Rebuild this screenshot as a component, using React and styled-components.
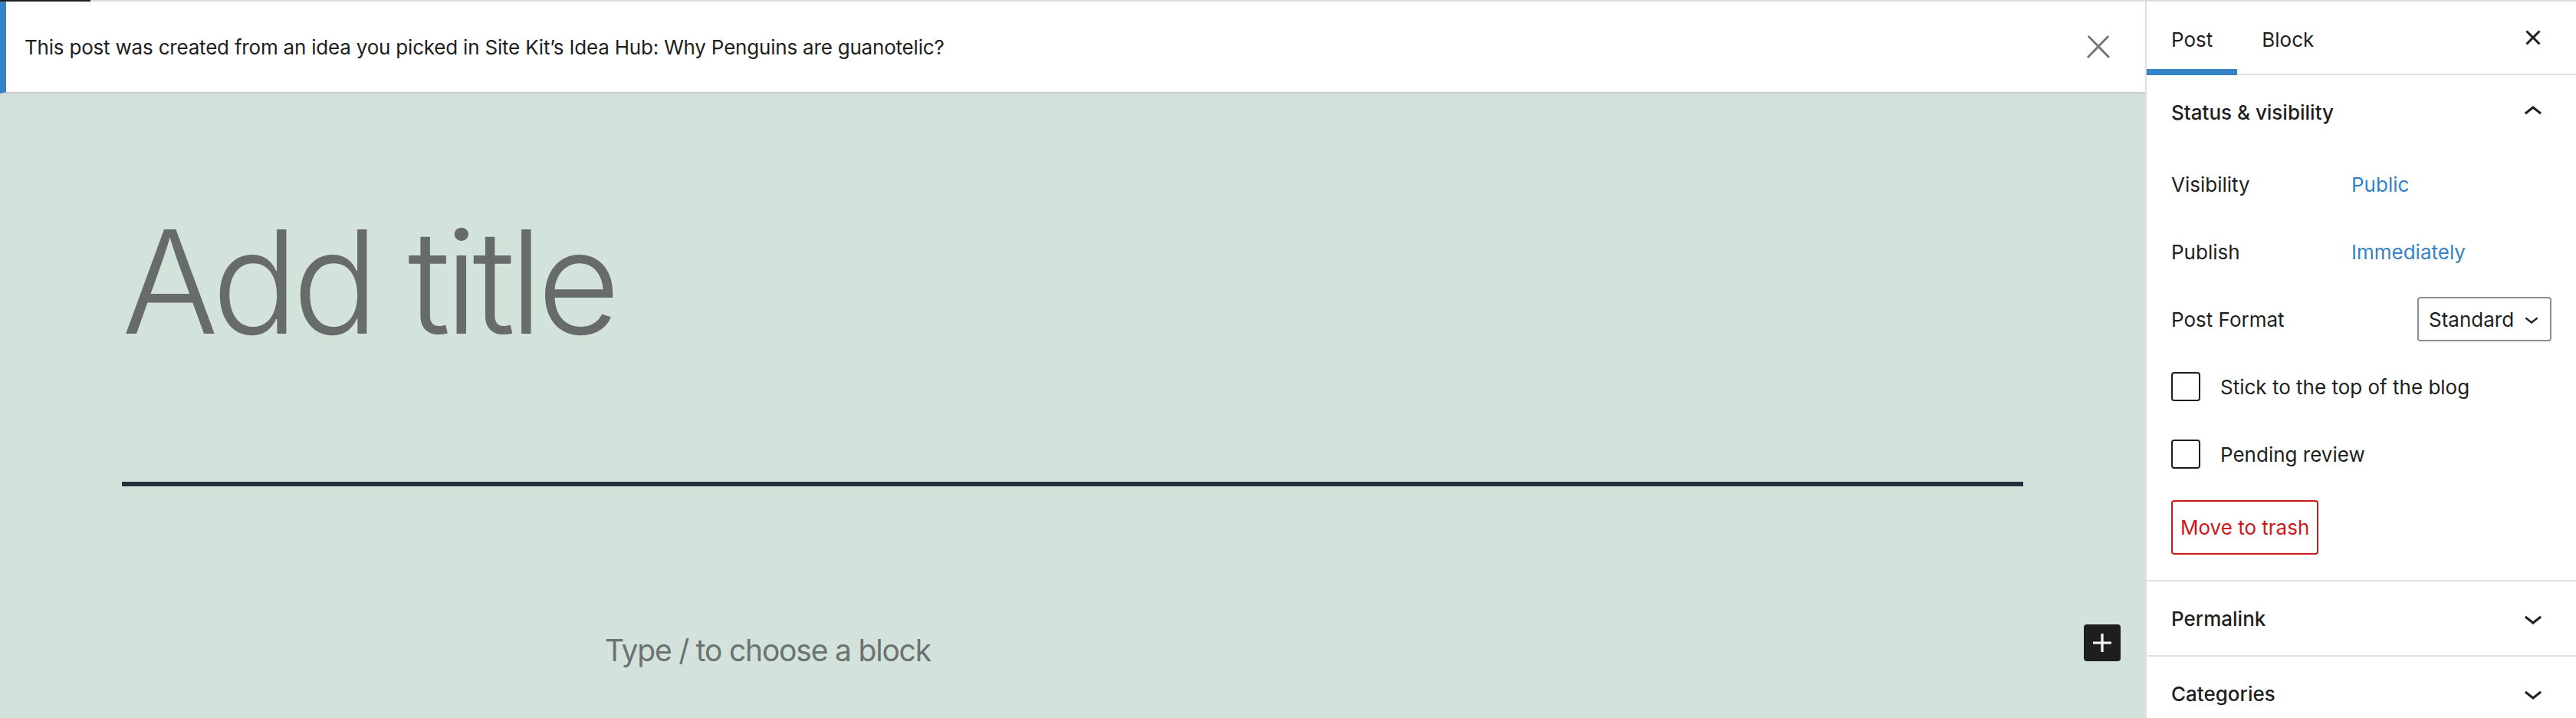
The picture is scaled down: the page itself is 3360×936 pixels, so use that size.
import React from "react"
import styled, { createGlobalStyle } from "styled-components"

const GlobalStyle = createGlobalStyle`
  html, body {
    margin: 0;
    padding: 0;
  }
  body {
    font-family: Inter, "Noto Sans", "Liberation Sans", sans-serif;
    color: #1e1e1e;
    -webkit-font-smoothing: antialiased;
  }
  * {
    box-sizing: border-box;
  }
`

const Shell = styled.div`
  width: 3360px;
  height: 936px;
  display: flex;
  flex-direction: column;
  overflow: hidden;
  background: #fff;
`

const TopEdge = styled.div`
  height: 2px;
  flex-shrink: 0;
  display: flex;
  background: #dddddd;
`

const TopEdgeMark = styled.div`
  width: 118px;
  background: #1e1e1e;
`

const Workspace = styled.div`
  flex: 1;
  display: flex;
  min-height: 0;
`

const EditorColumn = styled.main`
  flex: 1;
  min-width: 0;
  display: flex;
  flex-direction: column;
`

const Notice = styled.div`
  height: 120px;
  flex-shrink: 0;
  display: flex;
  align-items: center;
  justify-content: space-between;
  padding: 0 37px 0 24px;
  background: #fff;
  border-left: 8px solid #3582c4;
  border-bottom: 2px solid #cccccc;
`

const NoticeText = styled.p`
  margin: 0;
  font-size: 26px;
  letter-spacing: -0.2px;
  color: #1e1e1e;
`

const IconButton = styled.button`
  width: ${props => props.size || 48}px;
  height: ${props => props.size || 48}px;
  display: flex;
  align-items: center;
  justify-content: center;
  padding: 0;
  border: none;
  background: none;
  color: ${props => props.color || "#1e1e1e"};
  cursor: pointer;
`

const Canvas = styled.section`
  flex: 1;
  display: flex;
  flex-direction: column;
  align-items: center;
  padding-top: 152px;
  background: #d3e3dc;
`

const TitleBlock = styled.div`
  width: 2480px;
  padding-bottom: 167px;
  border-bottom: 6px solid #28303d;
`

const TitleInput = styled.h1`
  margin: 0;
  font-size: 187px;
  line-height: 1;
  font-weight: 300;
  letter-spacing: -7.5px;
  color: #676c6a;
`

const AppenderRow = styled.div`
  align-self: stretch;
  position: relative;
  display: flex;
  justify-content: center;
  margin-top: 185px;
`

const AppenderText = styled.p`
  width: 1220px;
  margin: 0;
  font-size: 39px;
  line-height: 1.5;
  letter-spacing: -1.2px;
  color: #6b7270;
`

const Inserter = styled.button`
  position: absolute;
  right: 32px;
  top: -5px;
  width: 48px;
  height: 48px;
  display: flex;
  align-items: center;
  justify-content: center;
  padding: 0;
  border: none;
  border-radius: 4px;
  background: #1e1e1e;
  color: #fff;
`

const Sidebar = styled.aside`
  width: 562px;
  flex-shrink: 0;
  display: flex;
  flex-direction: column;
  border-left: 2px solid #e0e0e0;
  background: #fff;
`

const TabBar = styled.div`
  height: 96px;
  flex-shrink: 0;
  display: flex;
  align-items: stretch;
  padding-right: 32px;
  border-bottom: 2px solid #e0e0e0;
`

const Tab = styled.button`
  position: relative;
  display: flex;
  align-items: center;
  padding: 4px 32px 0;
  border: none;
  background: none;
  font-family: inherit;
  font-size: 26px;
  color: #1e1e1e;

  &::after {
    content: "";
    position: absolute;
    left: 0;
    right: 0;
    bottom: -2px;
    height: 8px;
    background: ${props => (props.active ? "#3582c4" : "transparent")};
  }
`

const TabClose = styled.div`
  margin-left: auto;
  display: flex;
  align-items: center;
`

const Panel = styled.div`
  flex-shrink: 0;
  border-bottom: 2px solid #e0e0e0;
`

const PanelHeader = styled.div`
  height: 96px;
  display: flex;
  align-items: center;
  justify-content: space-between;
  padding: 0 32px;
  font-size: 26px;
  font-weight: 500;
  color: #1e1e1e;
`

const PanelBody = styled.div`
  display: flex;
  flex-direction: column;
  gap: 16px;
  padding: 10px 32px 33px;
`

const Row = styled.div`
  min-height: 72px;
  display: flex;
  align-items: center;
  justify-content: ${props => (props.spread ? "space-between" : "flex-start")};
  font-size: 26px;
`

const RowLabel = styled.span`
  width: ${props => props.width || "auto"};
  flex-shrink: 0;
`

const LinkValue = styled.a`
  color: #3582c4;
  text-decoration: none;
`

const Select = styled.div`
  width: 175px;
  height: 58px;
  display: flex;
  align-items: center;
  justify-content: space-between;
  padding: 0 6px 0 13px;
  border: 2px solid #8c8f94;
  border-radius: 4px;
  font-size: 26px;
`

const CheckRow = styled.label`
  display: flex;
  align-items: center;
  gap: 26px;
`

const CheckBox = styled.span`
  width: 38px;
  height: 38px;
  border: 2px solid #1e1e1e;
  border-radius: 4px;
  background: #fff;
`

const TrashButton = styled.button`
  align-self: flex-start;
  height: 71px;
  margin-top: 8px;
  padding: 0 10px;
  border: 2px solid #cc1818;
  border-radius: 4px;
  background: #fff;
  font-family: inherit;
  font-size: 26px;
  color: #cc1818;
`

const Icon = ({ d, size = 48 }) => (
  <svg width={size} height={size} viewBox="0 0 24 24" fill="currentColor">
    <path d={d} />
  </svg>
)

const CLOSE = "M13 11.8l6.1-6.3-1-1-6.1 6.2-6.1-6.2-1 1 6.1 6.3-6.5 6.7 1 1 6.5-6.6 6.5 6.6 1-1z"
const CLOSE_SMALL =
  "M12 13.06l3.712 3.713 1.061-1.06L13.061 12l3.712-3.712-1.06-1.06L12 10.938 8.288 7.227l-1.061 1.06L10.939 12l-3.712 3.712 1.06 1.061L12 13.061z"
const CHEVRON_UP = "M6.5 12.4L12 8l5.5 4.4-.9 1.2L12 10l-4.6 3.6-1-1.2z"
const CHEVRON_DOWN = "M17.5 11.6L12 16l-5.5-4.4.9-1.2L12 14l4.6-3.6 1 1.2z"
const PLUS = "M18 11.2h-5.2V6h-1.6v5.2H6v1.6h5.2V18h1.6v-5.2H18z"

const CollapsedPanel = ({ title }) => (
  <Panel>
    <PanelHeader>
      {title}
      <Icon d={CHEVRON_DOWN} />
    </PanelHeader>
  </Panel>
)

export default function App() {
  return (
    <Shell>
      <GlobalStyle />
      <TopEdge>
        <TopEdgeMark />
      </TopEdge>
      <Workspace>
        <EditorColumn>
          <Notice>
            <NoticeText>
              This post was created from an idea you picked in Site Kit’s Idea Hub: Why Penguins are guanotelic?
            </NoticeText>
            <IconButton color="#757575" aria-label="Dismiss this notice">
              <Icon d={CLOSE} />
            </IconButton>
          </Notice>
          <Canvas>
            <TitleBlock>
              <TitleInput>Add title</TitleInput>
            </TitleBlock>
            <AppenderRow>
              <AppenderText>Type / to choose a block</AppenderText>
              <Inserter aria-label="Add block">
                <Icon d={PLUS} />
              </Inserter>
            </AppenderRow>
          </Canvas>
        </EditorColumn>
        <Sidebar>
          <TabBar>
            <Tab active>Post</Tab>
            <Tab>Block</Tab>
            <TabClose>
              <IconButton aria-label="Close settings">
                <Icon d={CLOSE_SMALL} />
              </IconButton>
            </TabClose>
          </TabBar>
          <Panel>
            <PanelHeader>
              Status &amp; visibility
              <Icon d={CHEVRON_UP} />
            </PanelHeader>
            <PanelBody>
              <Row>
                <RowLabel width="235px">Visibility</RowLabel>
                <LinkValue href="#">Public</LinkValue>
              </Row>
              <Row>
                <RowLabel width="235px">Publish</RowLabel>
                <LinkValue href="#">Immediately</LinkValue>
              </Row>
              <Row spread>
                <RowLabel>Post Format</RowLabel>
                <Select>
                  Standard
                  <Icon d={CHEVRON_DOWN} size={36} />
                </Select>
              </Row>
              <Row>
                <CheckRow>
                  <CheckBox />
                  Stick to the top of the blog
                </CheckRow>
              </Row>
              <Row>
                <CheckRow>
                  <CheckBox />
                  Pending review
                </CheckRow>
              </Row>
              <TrashButton>Move to trash</TrashButton>
            </PanelBody>
          </Panel>
          <CollapsedPanel title="Permalink" />
          <CollapsedPanel title="Categories" />
        </Sidebar>
      </Workspace>
    </Shell>
  )
}
